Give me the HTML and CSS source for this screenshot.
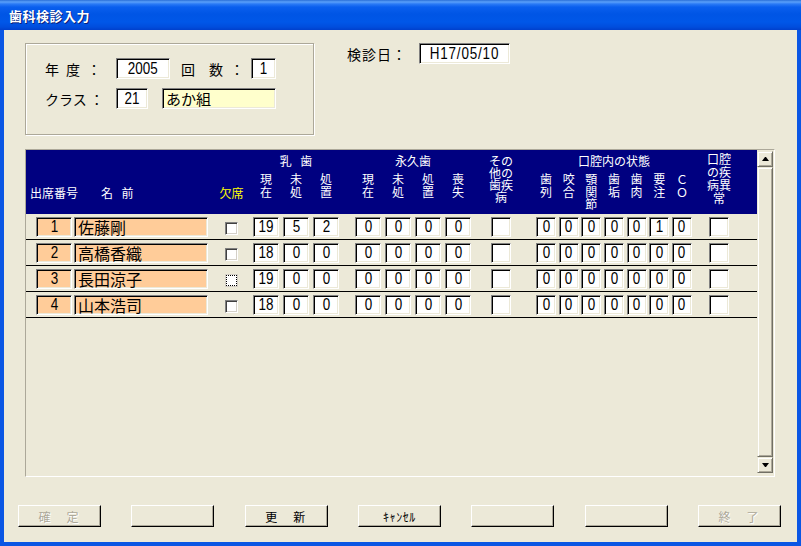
FILE: index.html
```html
<!DOCTYPE html>
<html lang="ja">
<head>
<meta charset="utf-8">
<title>歯科検診入力</title>
<link rel="stylesheet" href="styles.css">
</head>
<body>
<div class="window">
  <div class="titlebar"><span class="title">歯科検診入力</span></div>
  <div class="client">
    <div class="top">
      <div class="group">
        <div class="frow">
          <span class="lbl">年&ensp;度&ensp;：</span>
          <span class="edit num w54"><i>2005</i></span>
          <span class="lbl lbl2">回&emsp;数&ensp;：</span>
          <span class="edit num w25"><i>1</i></span>
        </div>
        <div class="frow">
          <span class="lbl">クラス ：</span>
          <span class="edit num w32"><i>21</i></span>
          <span class="edit text yellow w114">あか組</span>
        </div>
      </div>
      <div class="datebox">
        <span class="date-lbl">検診日：</span>
        <span class="edit num w91"><i>H17/05/10</i></span>
      </div>
    </div>

    <div class="grid">
      <div class="grid-main">
        <div class="ghead">
          <div class="c-num hl">出席番号</div>
          <div class="c-name hl name-h">名&ensp;&thinsp;前</div>
          <div class="c-chk hl yel">欠席</div>
          <div class="g-milk">
            <div class="gt">乳&ensp;&thinsp;歯</div>
            <div class="set subs">
              <div class="cell sub"><b>現</b><b>在</b></div>
              <div class="cell sub"><b>未</b><b>処</b></div>
              <div class="cell sub"><b>処</b><b>置</b></div>
            </div>
          </div>
          <div class="g-perm">
            <div class="gt">永久歯</div>
            <div class="set subs">
              <div class="cell sub"><b>現</b><b>在</b></div>
              <div class="cell sub"><b>未</b><b>処</b></div>
              <div class="cell sub"><b>処</b><b>置</b></div>
              <div class="cell sub"><b>喪</b><b>失</b></div>
            </div>
          </div>
          <div class="c-oth stackcol"><div class="stack s-oth"><b>その</b><b>他の</b><b>歯疾</b><b>病</b></div></div>
          <div class="g-oral">
            <div class="gt">口腔内の状態</div>
            <div class="set subs">
              <div class="cell sub"><b>歯</b><b>列</b></div>
              <div class="cell sub"><b>咬</b><b>合</b></div>
              <div class="cell sub"><b>顎</b><b>関</b><b>節</b></div>
              <div class="cell sub"><b>歯</b><b>垢</b></div>
              <div class="cell sub"><b>歯</b><b>肉</b></div>
              <div class="cell sub"><b>要</b><b>注</b></div>
              <div class="cell sub"><b>Ｃ</b><b>Ｏ</b></div>
            </div>
          </div>
          <div class="c-last stackcol"><div class="stack s-last"><b>口腔</b><b>の疾</b><b>病異</b><b>常</b></div></div>
        </div>

        <div class="grow">
          <div class="c-num"><span class="edit num peach"><i>1</i></span></div>
          <div class="c-name"><span class="edit text peach name">佐藤剛</span></div>
          <div class="c-chk"><span class="chk"></span></div>
          <div class="g-milk set"><span class="cell edit num"><i>19</i></span><span class="cell edit num"><i>5</i></span><span class="cell edit num"><i>2</i></span></div>
          <div class="g-perm set"><span class="cell edit num"><i>0</i></span><span class="cell edit num"><i>0</i></span><span class="cell edit num"><i>0</i></span><span class="cell edit num"><i>0</i></span></div>
          <div class="c-oth"><span class="edit box"></span></div>
          <div class="g-oral set"><span class="cell edit num"><i>0</i></span><span class="cell edit num"><i>0</i></span><span class="cell edit num"><i>0</i></span><span class="cell edit num"><i>0</i></span><span class="cell edit num"><i>0</i></span><span class="cell edit num"><i>1</i></span><span class="cell edit num"><i>0</i></span></div>
          <div class="c-last"><span class="edit box"></span></div>
        </div>

        <div class="grow">
          <div class="c-num"><span class="edit num peach"><i>2</i></span></div>
          <div class="c-name"><span class="edit text peach name">高橋香織</span></div>
          <div class="c-chk"><span class="chk"></span></div>
          <div class="g-milk set"><span class="cell edit num"><i>18</i></span><span class="cell edit num"><i>0</i></span><span class="cell edit num"><i>0</i></span></div>
          <div class="g-perm set"><span class="cell edit num"><i>0</i></span><span class="cell edit num"><i>0</i></span><span class="cell edit num"><i>0</i></span><span class="cell edit num"><i>0</i></span></div>
          <div class="c-oth"><span class="edit box"></span></div>
          <div class="g-oral set"><span class="cell edit num"><i>0</i></span><span class="cell edit num"><i>0</i></span><span class="cell edit num"><i>0</i></span><span class="cell edit num"><i>0</i></span><span class="cell edit num"><i>0</i></span><span class="cell edit num"><i>0</i></span><span class="cell edit num"><i>0</i></span></div>
          <div class="c-last"><span class="edit box"></span></div>
        </div>

        <div class="grow">
          <div class="c-num"><span class="edit num peach"><i>3</i></span></div>
          <div class="c-name"><span class="edit text peach name">長田涼子</span></div>
          <div class="c-chk"><span class="chk focus"></span></div>
          <div class="g-milk set"><span class="cell edit num"><i>19</i></span><span class="cell edit num"><i>0</i></span><span class="cell edit num"><i>0</i></span></div>
          <div class="g-perm set"><span class="cell edit num"><i>0</i></span><span class="cell edit num"><i>0</i></span><span class="cell edit num"><i>0</i></span><span class="cell edit num"><i>0</i></span></div>
          <div class="c-oth"><span class="edit box"></span></div>
          <div class="g-oral set"><span class="cell edit num"><i>0</i></span><span class="cell edit num"><i>0</i></span><span class="cell edit num"><i>0</i></span><span class="cell edit num"><i>0</i></span><span class="cell edit num"><i>0</i></span><span class="cell edit num"><i>0</i></span><span class="cell edit num"><i>0</i></span></div>
          <div class="c-last"><span class="edit box"></span></div>
        </div>

        <div class="grow">
          <div class="c-num"><span class="edit num peach"><i>4</i></span></div>
          <div class="c-name"><span class="edit text peach name">山本浩司</span></div>
          <div class="c-chk"><span class="chk"></span></div>
          <div class="g-milk set"><span class="cell edit num"><i>18</i></span><span class="cell edit num"><i>0</i></span><span class="cell edit num"><i>0</i></span></div>
          <div class="g-perm set"><span class="cell edit num"><i>0</i></span><span class="cell edit num"><i>0</i></span><span class="cell edit num"><i>0</i></span><span class="cell edit num"><i>0</i></span></div>
          <div class="c-oth"><span class="edit box"></span></div>
          <div class="g-oral set"><span class="cell edit num"><i>0</i></span><span class="cell edit num"><i>0</i></span><span class="cell edit num"><i>0</i></span><span class="cell edit num"><i>0</i></span><span class="cell edit num"><i>0</i></span><span class="cell edit num"><i>0</i></span><span class="cell edit num"><i>0</i></span></div>
          <div class="c-last"><span class="edit box"></span></div>
        </div>
      </div>
      <div class="vscroll">
        <div class="sbtn"><span class="arrow-up"></span></div>
        <div class="thumb"></div>
        <div class="sbtn"><span class="arrow-down"></span></div>
      </div>
    </div>

    <div class="buttons">
      <span class="btn disabled">確　定</span>
      <span class="btn"></span>
      <span class="btn">更　新</span>
      <span class="btn kana">ｷｬﾝｾﾙ</span>
      <span class="btn"></span>
      <span class="btn"></span>
      <span class="btn disabled">終　了</span>
    </div>
  </div>
</div>
</body>
</html>
```

FILE: styles.css
```css
* { box-sizing: border-box; }
html, body { margin: 0; padding: 0; }
body {
  width: 801px;
  height: 546px;
  overflow: hidden;
  background: #ece9d8;
  font-family: "Noto Sans CJK JP", sans-serif;
  color: #000;
}

.window {
  width: 801px;
  height: 546px;
  display: flex;
  flex-direction: column;
  background: #0a56e4;
}

.titlebar {
  flex: none;
  height: 30px;
  display: flex;
  align-items: center;
  padding-left: 9px;
  background: linear-gradient(180deg, #2a6fd8 0, #5aa0fa 2px, #2a7af6 4px, #0a5fee 7px, #0055e5 14px, #0057e8 22px, #004ddd 27px, #0040cc 30px);
}
.title {
  color: #fff;
  font-weight: bold;
  font-size: 13px;
  letter-spacing: 0.5px;
  text-shadow: 1px 1px 0 #0a1e78;
}

.client {
  flex: 1;
  margin: 0 4px 4px 4px;
  background: #ece9d8;
  padding: 13px 0 0 14px;
}

/* ---------- top area ---------- */
.top {
  display: flex;
  align-items: flex-start;
  margin-left: 7px;
}
.group {
  width: 289px;
  height: 92px;
  border: 1px solid #aca899;
  box-shadow: inset 1px 1px 0 #fff, 1px 1px 0 #fff;
  padding: 14px 0 0 19px;
  display: flex;
  flex-direction: column;
  gap: 9px;
}
.frow {
  display: flex;
  align-items: center;
  height: 21px;
}
.lbl {
  font-size: 14px;
  white-space: nowrap;
  width: 71px;
}
.lbl2 {
  width: 70px;
  margin-left: 11px;
}
.yellow { background: #ffffcc !important; margin-left: 14px; }

.datebox {
  display: flex;
  align-items: center;
  height: 21px;
  margin-left: 33px;
}
.date-lbl {
  font-size: 14px;
  letter-spacing: 1px;
  white-space: nowrap;
}
.datebox .edit { margin-left: 12px; }

/* ---------- edit boxes ---------- */
.edit {
  display: flex;
  align-items: center;
  justify-content: center;
  flex: none;
  height: 21px;
  background: #fff;
  border: 1px solid;
  border-color: #808080 #fff #fff #808080;
  box-shadow: inset 1px 1px 0 #000, inset -1px -1px 0 #ece9d8;
  white-space: nowrap;
}
.num {
  font-family: "Liberation Sans", Arial, sans-serif;
  font-size: 16px;
  line-height: 18px;
}
.num i {
  font-style: normal;
  display: inline-block;
  transform: scaleX(0.84);
}
.text {
  justify-content: flex-start;
  padding-left: 3px;
  font-size: 15px;
  line-height: 18px;
}
.w54 { width: 54px; }
.w25 { width: 25px; }
.w32 { width: 32px; }
.w114 { width: 114px; }
.w91 { width: 91px; }
.w91 i { letter-spacing: 1px; }

/* ---------- grid ---------- */
.grid {
  width: 750px;
  height: 328px;
  margin: 14px 0 0 7px;
  border: 1px solid;
  border-color: #aca899 #fff #fff #aca899;
  display: flex;
}
.grid-main {
  width: 731px;
  flex: none;
}
.ghead {
  height: 64px;
  background: #000080;
  color: #fff;
  font-size: 12px;
  display: flex;
  align-items: flex-start;
  padding-top: 4px;
}
.grow {
  height: 26px;
  border-bottom: 1px solid #000;
  display: flex;
  align-items: flex-start;
  padding-top: 3px;
}

.c-num  { flex: none; margin-left: 10px; width: 36px; }
.c-name { flex: none; margin-left: 2px;  width: 134px; }
.c-chk  { flex: none; margin-left: 17px; width: 13px; }
.g-milk { flex: none; margin-left: 15px; width: 86px; }
.g-perm { flex: none; margin-left: 16px; width: 116px; }
.c-oth  { flex: none; margin-left: 20px; width: 20px; }
.g-oral { flex: none; margin-left: 25px; width: 156px; }
.c-last { flex: none; margin-left: 17px; width: 20px; }

.set {
  display: flex;
  justify-content: space-between;
}
.g-milk .cell, .g-perm .cell { width: 26px; }
.g-oral .cell { width: 20px; }

.grow .edit { height: 20px; }
.c-num .edit { width: 36px; }
.c-name .edit { width: 134px; }
.box { width: 20px; }
.peach { background: #ffcc99; }
.name { font-size: 16px; padding-left: 3px; line-height: 18px; }

.chk {
  display: block;
  width: 13px;
  height: 13px;
  margin-top: 5px;
  background: #fff;
  border: 1px solid;
  border-color: #808080 #fff #fff #808080;
  box-shadow: inset 1px 1px 0 #404040, inset -1px -1px 0 #d4d0c8;
}
.chk.focus {
  border: 1px solid #d4d0c8;
  box-shadow: none;
  outline: 1px dotted #000;
  outline-offset: -2px;
}

/* header labels */
.hl {
  display: flex;
  justify-content: center;
  white-space: nowrap;
  padding-top: 32px;
  line-height: 13px;
}
.name-h {
  justify-content: flex-start;
  padding-left: 27px;
}
.yel { color: #ffff00; }
.gt {
  line-height: 13px;
  text-align: center;
  white-space: nowrap;
}
.subs { margin-top: 6px; }
.sub, .stack {
  display: flex;
  flex-direction: column;
  align-items: center;
  white-space: nowrap;
}
.sub b, .stack b {
  font-weight: normal;
  display: block;
  height: 12.5px;
  line-height: 12.5px;
}
.stackcol {
  display: flex;
  justify-content: center;
}
.s-oth { margin-top: 1px; }
.s-oth b { height: 12px; line-height: 12px; }
.s-last { margin-top: -2px; }
.s-last b { height: 13px; line-height: 13px; }

/* scrollbar */
.vscroll {
  width: 16px;
  flex: none;
  padding: 1px 0 3px;
  display: flex;
  flex-direction: column;
}
.sbtn, .thumb {
  background: #ece9d8;
  border: 1px solid;
  border-color: #ece9d8 #716f64 #716f64 #ece9d8;
  box-shadow: inset 1px 1px 0 #fff, inset -1px -1px 0 #aca899;
}
.sbtn {
  height: 16px;
  flex: none;
  display: flex;
  align-items: center;
  justify-content: center;
}
.thumb { flex: 1; }
.arrow-up, .arrow-down {
  width: 1px;
  height: 0;
  border-left: 3px solid transparent;
  border-right: 3px solid transparent;
  box-sizing: content-box;
}
.arrow-up { border-bottom: 4px solid #000; }
.arrow-down { border-top: 4px solid #000; }

/* buttons */
.buttons {
  display: flex;
  gap: 30.33px;
  margin-top: 28px;
}
.btn {
  width: 83px;
  height: 22px;
  flex: none;
  display: flex;
  align-items: center;
  justify-content: center;
  font-size: 12px;
  letter-spacing: 2px;
  background: #ece9d8;
  border: 1px solid;
  border-color: #fff #000 #000 #fff;
  box-shadow: inset -1px -1px 0 #aca899;
  white-space: nowrap;
}
.btn.kana { letter-spacing: 0.6px; }
.btn.disabled {
  color: #aca899;
  text-shadow: 1px 1px 0 #fff;
}
```
